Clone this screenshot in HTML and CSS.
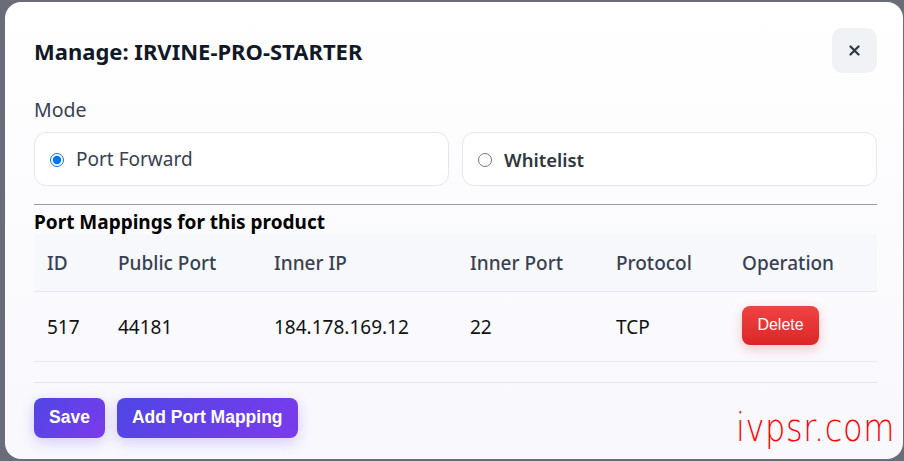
FILE: index.html
```html
<!DOCTYPE html>
<html lang="en">
<head>
  <meta charset="UTF-8">
  <title>Manage: IRVINE-PRO-STARTER</title>
  <link rel="stylesheet" href="styles.css">
</head>
<body>
  <section class="modal">
    <div class="modal-header">
      <h2 class="modal-title">Manage: IRVINE-PRO-STARTER</h2>
      <button type="button" class="close-btn" aria-label="Close">
        <svg width="11" height="11" viewBox="0 0 11 11">
          <path d="M1.5 1.5 L9.5 9.5 M9.5 1.5 L1.5 9.5" stroke="#2f3745" stroke-width="2.2" stroke-linecap="round"/>
        </svg>
      </button>
    </div>

    <div class="mode-label">Mode</div>
    <div class="mode-options">
      <label class="mode-card">
        <input type="radio" name="mode" checked>
        <span>Port Forward</span>
      </label>
      <label class="mode-card">
        <input type="radio" name="mode">
        <span class="strong">Whitelist</span>
      </label>
    </div>

    <hr class="divider">

    <h3 class="section-title">Port Mappings for this product</h3>
    <table class="mappings">
      <colgroup>
        <col style="width: 71px">
        <col style="width: 156px">
        <col style="width: 196px">
        <col style="width: 146px">
        <col style="width: 126px">
        <col>
      </colgroup>
      <thead>
        <tr>
          <th>ID</th>
          <th>Public Port</th>
          <th>Inner IP</th>
          <th>Inner Port</th>
          <th>Protocol</th>
          <th>Operation</th>
        </tr>
      </thead>
      <tbody>
        <tr>
          <td>517</td>
          <td>44181</td>
          <td>184.178.169.12</td>
          <td>22</td>
          <td>TCP</td>
          <td><button type="button" class="btn-delete">Delete</button></td>
        </tr>
      </tbody>
    </table>

    <div class="modal-footer">
      <button type="button" class="btn-primary">Save</button>
      <button type="button" class="btn-primary">Add Port Mapping</button>
    </div>
  </section>

  <div class="watermark">ivpsr.com</div>
</body>
</html>
```

FILE: styles.css
```css
* {
  box-sizing: border-box;
}

html, body {
  margin: 0;
  height: 100%;
}

body {
  background-color: rgb(106, 109, 121);
  font-family: "Noto Sans", "Open Sans", sans-serif;
  padding: 2px 1px 2px 5px;
  overflow: hidden;
}

.modal {
  background: linear-gradient(180deg, #ffffff 0%, #f8f8fd 100%);
  border-radius: 16px;
  height: 457px;
  padding: 26px 26px 22px 29px;
  display: flex;
  flex-direction: column;
}

.modal-header {
  display: flex;
  justify-content: space-between;
  align-items: center;
  height: 45px;
}

.modal-title {
  margin: 0;
  font-size: 22px;
  font-weight: 700;
  color: #111827;
}

.close-btn {
  width: 45px;
  height: 45px;
  border: none;
  border-radius: 10px;
  background-color: #f1f2f5;
  display: flex;
  align-items: center;
  justify-content: center;
  cursor: pointer;
  padding: 0;
}

.mode-label {
  margin-top: 25px;
  font-size: 19.5px;
  line-height: 24px;
  color: #374151;
}

.mode-options {
  margin-top: 10px;
  display: grid;
  grid-template-columns: 1fr 1fr;
  gap: 13px;
}

.mode-card {
  display: flex;
  align-items: center;
  height: 54px;
  padding: 0 15px;
  border: 1px solid #e5e7eb;
  border-radius: 12px;
  background-color: #ffffff;
  font-size: 19px;
  color: #374151;
}

.mode-card input {
  width: 14px;
  height: 14px;
  margin: 1px 12px 0 0;
  accent-color: #0075ff;
}

.mode-card .strong {
  font-weight: 600;
  font-size: 18.5px;
  color: #303640;
}

.divider {
  margin: 18px 0 0;
  border: none;
  border-top: 1px solid #9a9a9a;
}

.section-title {
  margin: 5px 0 0;
  font-size: 19px;
  line-height: 24px;
  font-weight: 700;
  color: #000;
}

.mappings {
  width: 100%;
  table-layout: fixed;
  border-collapse: collapse;
  font-size: 19px;
}

.mappings th {
  background-color: #f7f8fb;
  text-align: left;
  font-weight: 500;
  color: #374151;
  height: 57px;
  padding: 2px 13px 0;
  border-bottom: 1px solid #e8e9ee;
}

.mappings td {
  height: 70px;
  padding: 2px 13px 0;
  color: #111;
  border-bottom: 1px solid #e8e9ee;
}

.btn-delete {
  border: none;
  border-radius: 8px;
  width: 77px;
  height: 39px;
  background: linear-gradient(180deg, #ef4444, #dc2626);
  color: #fff;
  font-family: "Liberation Sans", Arial, sans-serif;
  font-size: 16px;
  box-shadow: 0 4px 12px rgba(239, 68, 68, 0.3);
  cursor: pointer;
  margin-top: -4px;
}

.modal-footer {
  margin-top: 20px;
  border-top: 1px solid #e5e7eb;
  padding-top: 15px;
  display: flex;
  gap: 12px;
}

.btn-primary {
  border: none;
  border-radius: 8px;
  height: 40px;
  padding: 0 15px;
  background: linear-gradient(135deg, #4f46e5, #7c3aed);
  color: #fff;
  font-family: "Liberation Sans", Arial, sans-serif;
  font-size: 17.5px;
  font-weight: 700;
  box-shadow: 0 4px 14px rgba(99, 70, 229, 0.25);
  cursor: pointer;
}

.watermark {
  position: absolute;
  right: 9px;
  bottom: 14px;
  color: #ff0000;
  font-family: "DejaVu Sans", sans-serif;
  font-size: 32px;
  font-weight: 200;
  letter-spacing: 0.6px;
  transform: scaleY(1.2);
  transform-origin: bottom right;
  line-height: 1;
}
```
